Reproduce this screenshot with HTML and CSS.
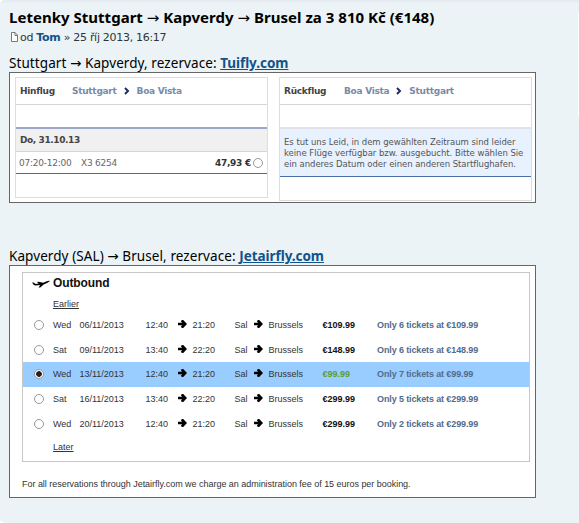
FILE: index.html
```html
<!DOCTYPE html>
<html lang="cs">
<head>
  <meta charset="UTF-8" />
  <meta name="viewport" content="width=device-width, initial-scale=1.0" />
  <title>Letenky Stuttgart → Kapverdy → Brusel</title>
  <link rel="stylesheet" href="styles.css">
</head>
<body>
  <div class="post">
    <h3>Letenky Stuttgart <span class="to">→</span> Kapverdy <span class="to">→</span> Brusel za 3 810 Kč (€148)</h3>
    <p class="author">
      <svg class="page" width="9" height="10" viewBox="0 0 9 10"><path d="M1.500 .5h3.500l2.500 2.500v6.500h-6z" fill="#fff" stroke="#777"/><path d="M5 .5v3h2.500" fill="none" stroke="#777"/></svg><span>od <b>Tom</b> » 25 říj 2013, 16:17</span>
    </p>

    <p class="leg leg-out"><span>Stuttgart <i class="arr">→</i> Kapverdy, rezervace: </span><a href="#">Tuifly.com</a></p>
    <div class="shot tuifly">
      <div class="flight">
        <div class="head"><b>Hinflug</b><span>Stuttgart</span><svg width="6" height="8" viewBox="0 0 6 8"><path d="M1 1l3 3-3 3" /></svg><span>Boa Vista</span></div>
        <div class="gap"></div>
        <div class="date">Do, 31.10.13</div>
        <div class="fare"><span class="time">07:20-12:00</span><span>X3 6254</span><b>47,93 €</b><i class="radio"></i></div>
      </div>
      <div class="flight back">
        <div class="head"><b>Rückflug</b><span>Boa Vista</span><svg width="6" height="8" viewBox="0 0 6 8"><path d="M1 1l3 3-3 3" /></svg><span>Stuttgart</span></div>
        <div class="gap"></div>
        <div class="sorry">Es tut uns Leid, in dem gewählten Zeitraum sind leider<br>keine Flüge verfügbar bzw. ausgebucht. Bitte wählen Sie<br>ein anderes Datum oder einen anderen Startflughafen.</div>
      </div>
    </div>

    <p class="leg leg-back"><span>Kapverdy (SAL) <i class="arr">→</i> Brusel, rezervace: </span><a href="#">Jetairfly.com</a></p>
    <div class="shot jetair">
      <div class="outbound">
        <h4><svg width="18" height="8" viewBox="0 0 18 8"><path d="M0 2.600l1.400 0 2.400 1.300 3-.3-2-1.700 1.800-.2 4.600 1.100 3.500-1.500c1.500-.6 2.900-.7 3-.2.1.500-1.200 1.200-2.600 1.800l-3.400 1.500-3.400 3-1.700.2 1.600-2.500-4.700.5-1.600-.6z"/></svg>Outbound</h4>
        <a class="more" href="#">Earlier</a>
        <div id="rows"></div>
        <a class="more" href="#">Later</a>
      </div>
      <p class="fee">For all reservations through Jetairfly.com we charge an administration fee of 15 euros per booking.</p>
    </div>
  </div>

  <script>
    const flights = [
      ['Wed', '06/11/2013', '12:40', '21:20', '€109.99', 6],
      ['Sat', '09/11/2013', '13:40', '22:20', '€148.99', 6],
      ['Wed', '13/11/2013', '12:40', '21:20', '€99.99', 7],
      ['Sat', '16/11/2013', '13:40', '22:20', '€299.99', 5],
      ['Wed', '20/11/2013', '12:40', '21:20', '€299.99', 2]
    ];
    const arrow = '<svg class="arrow" width="9" height="8" viewBox="0 0 9 8"><path d="M0 2.800h4L2.800 .9 4.200 0h1L9 4 5.200 8h-1L2.800 7.100 4 5.200H0z"/></svg>';

    flights.forEach((f, idx) => {
      const row = document.createElement('div');
      row.className = idx === 2 ? 'row selected' : 'row';
      row.innerHTML = `<i class="radio"></i><span>${f[0]}</span><span>${f[1]}</span><span>${f[2]}</span>${arrow}<span>${f[3]}</span><span>Sal</span>${arrow}<span>Brussels</span><b>${f[4]}</b><span class="left">Only ${f[5]} tickets at ${f[4]}</span>`;
      document.getElementById('rows').appendChild(row);
    });
  </script>
</body>
</html>
```
FILE: styles.css
```css
body {
  margin: 0;
  background: #fff;
  overflow: hidden;
}
h3, h4, p {
  margin: 0;
}
i {
  font-style: normal;
}
.post {
  box-sizing: border-box;
  height: 523px;
  padding: 5px 0 0 9px;
  background: linear-gradient(#fff, #fff) right 10px / 1px 105px no-repeat #ebf3f6;
  border-top: 2px solid #e5ebf1;
  border-radius: 5px 0 0 5px;
  white-space: nowrap;
}
h3 {
  height: 23px;
  line-height: 20px;
  font-family: "Noto Sans", sans-serif;
  font-size: 15px;
  letter-spacing: 0.02px;
  color: #000;
}
.to {
  font-family: "DejaVu Sans", sans-serif;
  font-weight: normal;
}
.author {
  display: flex;
  height: 14px;
  line-height: 15px;
  font-family: "DejaVu Sans", Verdana, sans-serif;
  font-size: 11px;
  letter-spacing: -0.3px;
  color: #333;
}
.author b {
  color: #105289;
}
.page {
  margin: 2px 1px 0 1px;
}
.leg {
  height: 18px;
  line-height: 18px;
  font-family: "Noto Sans", sans-serif;
  font-size: 13.5px;
  color: #000;
}
.leg span {
  letter-spacing: 0.08px;
}
.leg-out {
  margin-top: 10px;
}
.leg-back {
  margin-top: 44px;
}
.arr {
  font-family: "DejaVu Sans", sans-serif;
}
.leg a {
  font-weight: bold;
  letter-spacing: -0.05px;
  color: #105289;
}
.shot {
  box-sizing: border-box;
  width: 527px;
  background: #fff;
  border: 1px solid #666;
}
.tuifly {
  display: flex;
  gap: 11px;
  height: 131px;
  padding: 4px 0 0 5px;
  font-family: "DejaVu Sans", Verdana, sans-serif;
  font-size: 9px;
  color: #444;
}
.flight {
  box-sizing: border-box;
  width: 253px;
  height: 121px;
  border: 1px solid #ddd;
}
.flight.back {
  height: 124px;
}
.head {
  display: flex;
  align-items: center;
  box-sizing: border-box;
  height: 27px;
  padding-left: 4px;
  letter-spacing: -0.28px;
  border-bottom: 1px solid #d5d5d5;
}
.head b {
  width: 52px;
}
.back .head b {
  width: 60px;
}
.head span {
  font-weight: bold;
  color: #778ba8;
}
.head svg {
  margin: 0 7px;
  fill: none;
  stroke: #223064;
  stroke-width: 2;
}
.gap {
  height: 22px;
  border-bottom: 2px solid #9ba8c7;
}
.back .gap {
  border-color: #e3e2ea;
}
.date {
  height: 22px;
  padding-left: 4px;
  line-height: 23px;
  font-weight: bold;
  letter-spacing: -0.4px;
  background: #f0f0f0;
  border-bottom: 1px solid #d5d5d5;
}
.fare {
  display: flex;
  align-items: center;
  height: 21px;
  padding: 0 4px 0 3px;
  letter-spacing: -0.25px;
  border-bottom: 1px solid #4f6a9c;
  color: #666;
}
.fare .time {
  width: 62px;
}
.fare b {
  margin-left: auto;
  color: #333;
}
.radio {
  box-sizing: border-box;
  width: 10px;
  height: 10px;
  border: 1px solid #999;
  border-radius: 50%;
  background: #fff;
}
.fare .radio {
  margin-left: 2px;
}
.sorry {
  box-sizing: border-box;
  height: 48px;
  padding: 8px 0 0 4px;
  line-height: 11px;
  font-size: 8.5px;
  letter-spacing: -0.04px;
  background: #e8f1fe;
  border-bottom: 1px solid #4a6ea5;
  color: #555;
}
.jetair {
  height: 233px;
  padding: 6px 0 0 12px;
  font-family: "Liberation Sans", Arial, sans-serif;
  font-size: 9px;
  color: #333;
}
.outbound {
  box-sizing: border-box;
  width: 508px;
  height: 190px;
  border: 1px solid #c8c8c8;
}
h4 {
  display: flex;
  align-items: center;
  height: 20px;
  padding-left: 9px;
  font-size: 12px;
  letter-spacing: -0.1px;
  color: #111;
}
h4 svg {
  margin: 2px 3px 0 0;
}
.more {
  display: block;
  height: 20px;
  padding-left: 30px;
  line-height: 22px;
  color: #333;
}
.row {
  display: grid;
  grid-template-columns: 19px 26.5px 66px 32px 15px 42px 19px 15px 54px 54.5px auto;
  align-items: center;
  height: 24.6px;
  padding-left: 11px;
}
.row.selected {
  background: #99ccff;
}
.selected .radio {
  background: radial-gradient(circle, #222 2.5px, #fff 3.2px);
}
.row .arrow {
  margin-top: -2px;
}
.row b {
  color: #111;
}
.selected b {
  color: #5a9e32;
}
.row .left {
  font-weight: bold;
  letter-spacing: -0.12px;
  color: #536b8c;
}
.fee {
  margin-top: 16px;
  line-height: 12px;
  letter-spacing: -0.03px;
}
```
